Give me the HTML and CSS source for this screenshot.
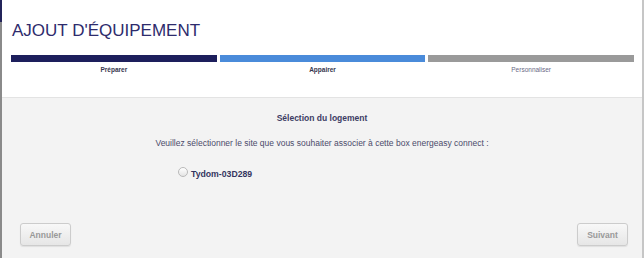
FILE: index.html
```html
<!DOCTYPE html>
<html lang="fr">
<head>
    <meta charset="UTF-8">
    <meta name="viewport" content="width=device-width, initial-scale=1.0">
    <title>Ajout d'équipement</title>
    <link rel="stylesheet" href="styles.css">
</head>
<body>
    <div id="frame">
        <div id="header">
            <h1 id="title">AJOUT D'ÉQUIPEMENT</h1>
            <ul id="steps">
                <li class="done">
                    <span class="bar"></span>
                    <span class="label">Préparer</span>
                </li>
                <li class="current">
                    <span class="bar"></span>
                    <span class="label">Appairer</span>
                </li>
                <li class="todo">
                    <span class="bar"></span>
                    <span class="label">Personnaliser</span>
                </li>
            </ul>
        </div>
        <div id="content">
            <h2 class="heading">Sélection du logement</h2>
            <p class="intro">Veuillez sélectionner le site que vous souhaiter associer à cette box energeasy connect :</p>
            <label class="site">
                <input type="radio" name="site">
                <span>Tydom-03D289</span>
            </label>
            <div id="actions">
                <button class="btn">Annuler</button>
                <button class="btn">Suivant</button>
            </div>
        </div>
    </div>
</body>
</html>
```

FILE: styles.css
```css
*{
    margin: 0px;
    padding: 0px;
    box-sizing: border-box;
}
body{
    font-family: "Liberation Sans", Arial, sans-serif;
    background: #ffffff;
}
#frame{
    position: relative;
    display: flex;
    flex-direction: column;
    height: 258px;
    border-left: 2px solid #8a8a8a;
    border-right: 2px solid #c6c6c6;
}
/* coin sombre de la fenêtre parente */
#frame::before{
    content: "";
    position: absolute;
    left: -2px;
    top: 0;
    width: 2px;
    height: 22px;
    background: #23245a;
}
#header{
    background: #ffffff;
    padding: 21px 8px 23px 9px;
    border-bottom: 1px solid #e3e3e3;
}
#title{
    font-size: 17px;
    line-height: 20px;
    font-weight: normal;
    color: #2e2b6c;
    padding-left: 1px;
}
#steps{
    list-style: none;
    display: grid;
    grid-template-columns: 1fr 1fr 1fr;
    gap: 3px;
    margin-top: 14px;
}
#steps > li{
    display: flex;
    flex-direction: column;
    align-items: center;
}
#steps .bar{
    display: block;
    width: 100%;
    height: 7px;
}
#steps .label{
    margin-top: 4px;
    font-size: 6.5px;
    line-height: 8px;
    color: #36364e;
    font-weight: bold;
}
.done .bar{
    background: #1d1f5c;
}
.current .bar{
    background: #4a8bda;
}
.todo .bar{
    background: #9a9a9a;
}
#steps .todo .label{
    font-weight: normal;
    color: #6a6a86;
}
#content{
    flex: 1;
    display: flex;
    flex-direction: column;
    background: #f3f3f3;
    padding-top: 14px;
    text-align: center;
    color: #4b4b6b;
}
.heading{
    font-size: 8.5px;
    line-height: 12px;
    font-weight: bold;
    color: #3c3c64;
}
.intro{
    margin-top: 13px;
    font-size: 8.5px;
    line-height: 12px;
}
.site{
    display: flex;
    align-items: center;
    gap: 3px;
    margin-top: 19px;
    padding-left: 176px;
    font-size: 8.7px;
    line-height: 12px;
    font-weight: bold;
    color: #333560;
}
.site input{
    appearance: none;
    width: 10px;
    height: 10px;
    border-radius: 50%;
    border: 1px solid #b9b9b9;
    background: linear-gradient(#ffffff, #e4e4e4);
    margin-top: -4px;
}
#actions{
    margin-top: auto;
    display: flex;
    justify-content: space-between;
    padding: 0 14px 12px 18px;
}
.btn{
    width: 51px;
    height: 23px;
    border: 1px solid #cccccc;
    border-radius: 3px;
    background: linear-gradient(#f8f8f8, #e6e6e6);
    box-shadow: 0 1px 1px rgba(0,0,0,0.08);
    font-family: "Liberation Sans", Arial, sans-serif;
    font-size: 8.5px;
    font-weight: bold;
    color: #999999;
}
```
